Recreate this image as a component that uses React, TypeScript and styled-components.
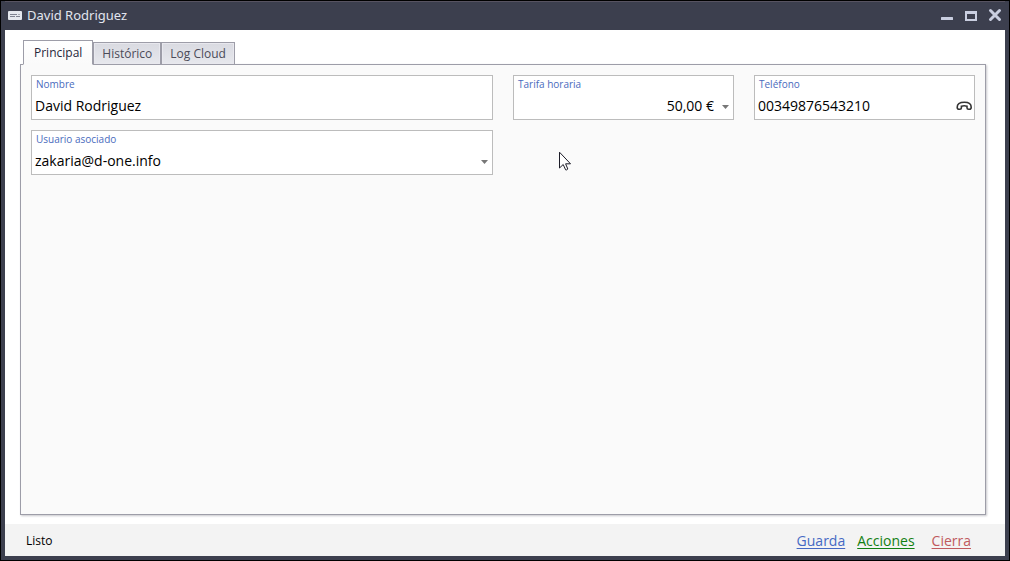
import React, { useState } from "react";
import styled, { createGlobalStyle, css } from "styled-components";

const GlobalStyle = createGlobalStyle`
  * { box-sizing: border-box; }
  body {
    margin: 0;
    background: #000;
    font-family: "Open Sans", "Noto Sans", sans-serif;
    color: #000;
  }
  button, input, select { font-family: inherit; margin: 0; }
`;

const Window = styled.div`
  position: relative;
  display: flex;
  flex-direction: column;
  min-height: 100vh;
  border: 1px solid #000;
  padding: 0 4px 4px;
  background: #3c3f4e;
`;

const TitleBar = styled.header`
  display: flex;
  align-items: center;
  height: 29px;
  padding: 0 2px 2px 3px;
  border-top: 1px solid #575361;
`;

const Title = styled.h1`
  flex: 1;
  margin: 0 0 0 5px;
  font-family: "Noto Sans", sans-serif;
  font-size: 13px;
  line-height: 20px;
  font-weight: 400;
  color: #e2e5ee;
`;

const WindowControls = styled.div`
  display: flex;
  gap: 8px;
`;

const WindowButton = styled.button`
  display: flex;
  width: 16px;
  height: 16px;
  padding: 0;
  border: 0;
  background: none;
`;

const Client = styled.main`
  flex: 1;
  display: flex;
  flex-direction: column;
  padding: 10px 19px 9px 15px;
  background: #fff;
`;

const TabList = styled.div`
  display: flex;
  align-items: flex-end;
  margin: 0 0 -1px 3px;
  z-index: 1;
`;

const Tab = styled.button<{ $active: boolean }>`
  height: 23px;
  padding: 0 8px;
  border: 1px solid #9d9da8;
  background: linear-gradient(#d9dae1, #e7e8ed);
  box-shadow: inset 0 0 0 1px #e8e8ee;
  font-size: 12px;
  line-height: 20px;
  color: #4b4b58;
  ${(p) =>
    p.$active &&
    css`
      height: 25px;
      padding: 0 10px;
      border-bottom-color: #fafafa;
      background: linear-gradient(#fff, #fafafa);
      box-shadow: none;
      color: #26263a;
    `}
`;

const Panel = styled.section`
  flex: 1;
  padding: 10px;
  border: 1px solid #9d9da8;
  background: #fafafa;
  box-shadow: 1px 1px 2px #c8c8cc;
`;

const Fields = styled.div`
  display: grid;
  grid-template-columns: repeat(4, minmax(0, 1fr));
  gap: 10px 20px;
`;

const Field = styled.div<{ $span?: number }>`
  grid-column: span ${(p) => p.$span ?? 1};
  height: 45px;
  border: 1px solid #bcbcbc;
  background: #fff;
`;

const SecondRowField = styled(Field)`
  grid-column: 1 / span 2;
`;

const Label = styled.label`
  display: block;
  padding: 0 4px;
  font-size: 10px;
  line-height: 16px;
  color: #4a6bbd;
`;

const ControlRow = styled.div`
  display: flex;
  align-items: center;
  height: 27px;
  padding: 0 2px 0 3px;
`;

const controlText = css`
  flex: 1;
  min-width: 0;
  height: 24px;
  padding: 0;
  border: 0;
  outline: 0;
  background: transparent;
  color: #000;
  font-size: 14px;
  line-height: 24px;
`;

const TextInput = styled.input`
  ${controlText}
`;

const Select = styled.select<{ $right?: boolean }>`
  ${controlText}
  appearance: none;
  ${(p) => p.$right && "text-align-last: right;"}
`;

const Arrow = styled.svg`
  flex: none;
  margin: 2px 2px 0 8px;
`;

const Status = styled.footer`
  display: flex;
  align-items: center;
  height: 32px;
  padding: 2px 34px 0 21px;
  background: #f3f3f3;
`;

const StatusText = styled.span`
  flex: 1;
  font-size: 12px;
  line-height: 20px;
`;

const Actions = styled.nav`
  display: flex;
  gap: 12px;
`;

const Action = styled.a<{ $color: string }>`
  color: ${(p) => p.$color};
  font-size: 14px;
  line-height: 20px;
  text-decoration: underline;
  text-underline-offset: 2px;
`;

const LastAction = styled(Action)`
  margin-left: 5px;
`;

const Pointer = styled.svg`
  position: absolute;
  left: 557px;
  top: 150px;
  pointer-events: none;
`;

const DropArrow = () => (
  <Arrow width="7" height="4" viewBox="0 0 7 4" aria-hidden="true">
    <path d="M0 0H7L3.5 4Z" fill="#777" />
  </Arrow>
);

const tabs = ["Principal", "Histórico", "Log Cloud"];

export default function App() {
  const [active, setActive] = useState(tabs[0]);
  return (
    <>
      <GlobalStyle />
      <Window>
        <TitleBar>
          <svg width="14" height="9" viewBox="0 0 14 9" aria-hidden="true">
            <rect width="14" height="9" rx="1" fill="#e4e7ee" />
            <path d="M2 3.5H9M2 5.5H7M8 5.5H12" stroke="#7d8190" />
            <path d="M10 3.5H12" stroke="#a6a9b4" />
          </svg>
          <Title>David Rodriguez</Title>
          <WindowControls>
            <WindowButton aria-label="Minimizar">
              <svg width="16" height="16" viewBox="0 0 16 16">
                <rect x="2" y="10" width="12" height="3" rx="0.5" fill="#c9cee0" />
              </svg>
            </WindowButton>
            <WindowButton aria-label="Maximizar">
              <svg width="16" height="16" viewBox="0 0 16 16">
                <path d="M2 4H14V14H2ZM4 7V12H12V7Z" fill="#c9cee0" fillRule="evenodd" />
              </svg>
            </WindowButton>
            <WindowButton aria-label="Cerrar">
              <svg width="16" height="16" viewBox="0 0 16 16">
                <path d="M3.5 3.5L12.5 12.5M12.5 3.5L3.5 12.5" stroke="#c9cee0" strokeWidth="3" strokeLinecap="round" />
              </svg>
            </WindowButton>
          </WindowControls>
        </TitleBar>
        <Client>
          <TabList role="tablist">
            {tabs.map((t) => (
              <Tab key={t} role="tab" aria-selected={t === active} $active={t === active} onClick={() => setActive(t)}>
                {t}
              </Tab>
            ))}
          </TabList>
          <Panel role="tabpanel">
            <Fields>
              <Field $span={2}>
                <Label htmlFor="nombre">Nombre</Label>
                <ControlRow>
                  <TextInput id="nombre" defaultValue="David Rodriguez" />
                </ControlRow>
              </Field>
              <Field>
                <Label htmlFor="tarifa">Tarifa horaria</Label>
                <ControlRow>
                  <Select id="tarifa" $right>
                    <option>50,00 €</option>
                  </Select>
                  <DropArrow />
                </ControlRow>
              </Field>
              <Field>
                <Label htmlFor="telefono">Teléfono</Label>
                <ControlRow>
                  <TextInput id="telefono" type="tel" defaultValue="00349876543210" />
                  <svg width="16" height="10" viewBox="0 0 16 10" aria-hidden="true">
                    <path
                      d="M1.2 6.3C1.2 2.8 4.2 1.3 8.4 1.3S15.2 2.8 15.2 6.3C15.2 7.9 14.5 8.3 13.4 8.3H12.5C11.5 8.3 11 7.8 11 6.8V5.2Q8.2 4.4 5.4 5.2V6.8C5.4 7.8 4.9 8.3 3.9 8.3H3C1.9 8.3 1.2 7.8 1.2 6.3Z"
                      fill="none"
                      stroke="#333"
                      strokeWidth="1.6"
                    />
                  </svg>
                </ControlRow>
              </Field>
              <SecondRowField>
                <Label htmlFor="usuario">Usuario asociado</Label>
                <ControlRow>
                  <Select id="usuario">
                    <option>zakaria@d-one.info</option>
                  </Select>
                  <DropArrow />
                </ControlRow>
              </SecondRowField>
            </Fields>
          </Panel>
        </Client>
        <Status>
          <StatusText>Listo</StatusText>
          <Actions>
            <Action href="#guarda" $color="#4569c4">Guarda</Action>
            <Action href="#acciones" $color="#128012">Acciones</Action>
            <LastAction href="#cierra" $color="#c05a5e">Cierra</LastAction>
          </Actions>
        </Status>
        <Pointer width="13" height="20" viewBox="0 0 13 20" aria-hidden="true">
          <path
            d="M1.5 1.2V17L5.2 13.5L7.6 18.8Q8.8 19.4 9.8 18L7.6 12.8H12.5Z"
            fill="#fff"
            stroke="#1c1c28"
          />
        </Pointer>
      </Window>
    </>
  );
}
